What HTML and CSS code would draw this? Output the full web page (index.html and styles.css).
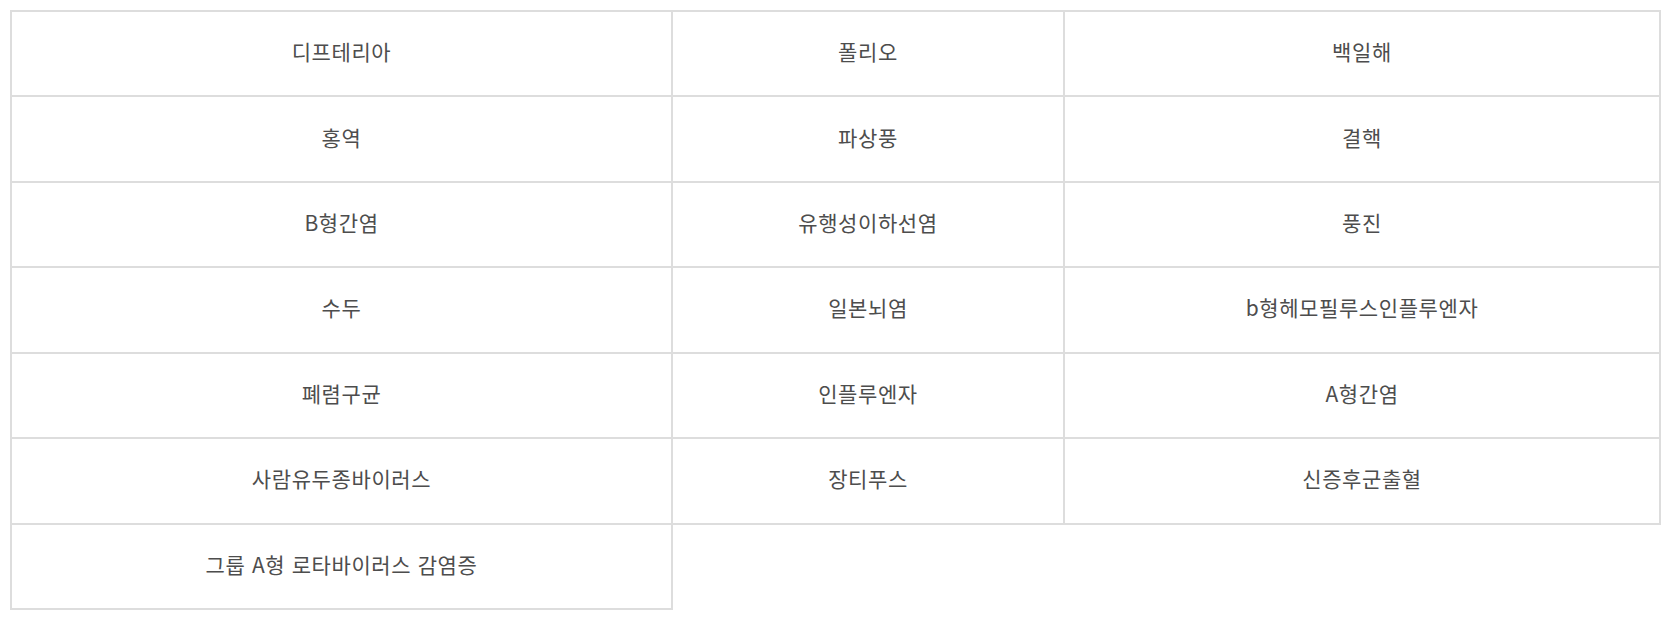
FILE: index.html
```html
<!DOCTYPE html>
<html lang="ko">
<head>
<meta charset="utf-8">
<link rel="stylesheet" href="styles.css">
</head>
<body>
<div class="grid">
  <div class="cell">디프테리아</div>
  <div class="cell">폴리오</div>
  <div class="cell">백일해</div>
  <div class="cell">홍역</div>
  <div class="cell">파상풍</div>
  <div class="cell">결핵</div>
  <div class="cell">B형간염</div>
  <div class="cell">유행성이하선염</div>
  <div class="cell">풍진</div>
  <div class="cell">수두</div>
  <div class="cell">일본뇌염</div>
  <div class="cell">b형헤모필루스인플루엔자</div>
  <div class="cell">폐렴구균</div>
  <div class="cell">인플루엔자</div>
  <div class="cell">A형간염</div>
  <div class="cell">사람유두종바이러스</div>
  <div class="cell">장티푸스</div>
  <div class="cell">신증후군출혈</div>
  <div class="cell">그룹 A형 로타바이러스 감염증</div>
</div>
</body>
</html>
```
FILE: styles.css
```css
html, body {
  margin: 0;
  padding: 0;
  background: #fff;
}
body {
  padding: 10px;
  font-family: "Noto Sans CJK KR", "Noto Sans", sans-serif;
}
.grid {
  display: grid;
  grid-template-columns: 661px 392px 596px;
  grid-template-rows: repeat(7, 1fr);
  width: 1649px;
  height: 598px;
  border-top: 2px solid #dddddd;
  border-left: 2px solid #dddddd;
}
.cell {
  display: flex;
  align-items: center;
  justify-content: center;
  border-right: 2px solid #dddddd;
  border-bottom: 2px solid #dddddd;
  font-size: 21px;
  color: #4d4d4d;
  letter-spacing: 0.6px;
  padding-bottom: 5px;
}
```
